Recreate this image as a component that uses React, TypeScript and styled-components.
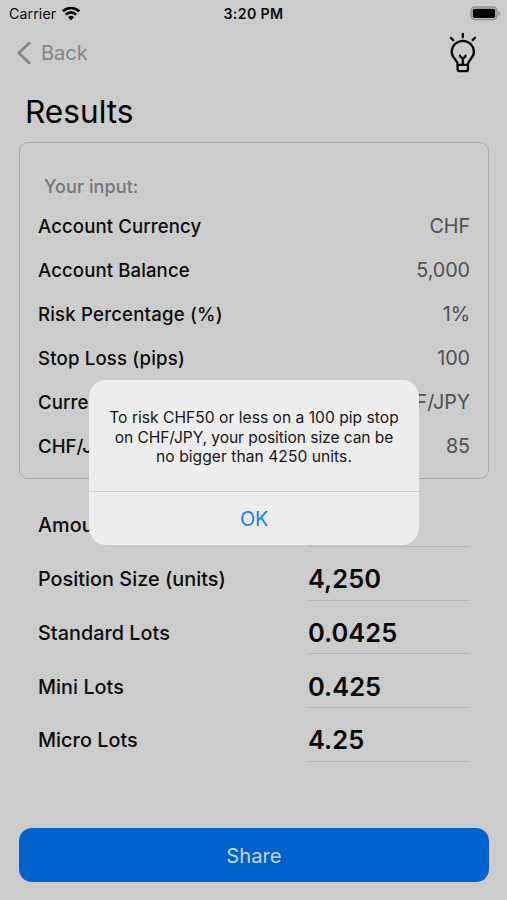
import React from 'react';
import styled, { createGlobalStyle } from 'styled-components';

const GlobalStyle = createGlobalStyle`
  * { box-sizing: border-box; }
  body { margin: 0; background: #cccccc; font-family: Inter, "Liberation Sans", sans-serif; }
`;

const Screen = styled.div`
  position: relative;
  display: flex;
  flex-direction: column;
  width: 507px;
  height: 900px;
  overflow: hidden;
  background: #cccccc;
  color: #0c0c0c;
`;

const StatusBar = styled.header`
  display: grid;
  grid-template-columns: 1fr auto 1fr;
  align-items: center;
  height: 27px;
  padding: 0 6px 0 9px;
`;

const Carrier = styled.div`
  display: flex;
  align-items: center;
  gap: 6px;
  font-size: 14.2px;
  letter-spacing: 0.1px;
`;

const Clock = styled.div`
  margin-right: 3px;
  font-size: 14.2px;
  font-weight: 600;
  letter-spacing: 0.35px;
`;

const Battery = styled.svg`
  justify-self: end;
`;

const NavBar = styled.nav`
  display: flex;
  justify-content: space-between;
  align-items: center;
  height: 52px;
  padding: 0 29px 0 17px;
`;

const BackButton = styled.button`
  display: flex;
  align-items: center;
  gap: 10px;
  padding: 0 0 1px;
  border: 0;
  background: none;
  color: #858585;
  font: 400 20px/24px Inter, sans-serif;
`;

const Title = styled.h1`
  margin: 0;
  height: 63px;
  padding-left: 25px;
  color: #000;
  font-size: 31.6px;
  font-weight: 400;
  line-height: 65px;
`;

const InputCard = styled.section`
  height: 337px;
  margin: 0 18px 0 19px;
  padding: 27px 18px 0;
  border: 1.4px solid #ababab;
  border-radius: 9px;
`;

const CardCaption = styled.div`
  height: 34px;
  padding-left: 6px;
  color: #777777;
  font-size: 18px;
  font-weight: 500;
  line-height: 34px;
  letter-spacing: 0.1px;
`;

const InputRow = styled.div`
  display: flex;
  align-items: center;
  justify-content: space-between;
  height: 44px;
`;

const Label = styled.span<{ $spacing: number }>`
  font-size: 18.6px;
  font-weight: 500;
  letter-spacing: ${(p) => p.$spacing}px;
  white-space: nowrap;
`;

const InputValue = styled.span`
  color: #505050;
  font-size: 19.8px;
  letter-spacing: -0.1px;
`;

const ResultList = styled.section`
  display: flex;
  flex-direction: column;
  margin-top: 14px;
  padding: 0 37px 0 38px;
`;

const ResultRow = styled.div`
  display: grid;
  grid-template-columns: 1fr 162px;
  align-items: end;
  height: 53.75px;
`;

const ResultLabel = styled.span`
  height: 42.5px;
  font-size: 19.8px;
  font-weight: 500;
  line-height: 43px;
  letter-spacing: 0.04px;
  white-space: nowrap;
`;

const ResultValue = styled.div`
  height: 42.5px;
  border-bottom: 1.4px solid #b6b6b6;
  color: #080808;
  font-size: 25.5px;
  font-weight: 600;
  line-height: 42px;
`;

const ShareButton = styled.button`
  height: 54px;
  margin: auto 18px 18px 19px;
  border: 0;
  border-radius: 13px;
  background: #0062cc;
  color: #c7d6ea;
  font: 400 20.2px Inter, sans-serif;
`;

const Alert = styled.div`
  position: absolute;
  top: 380px;
  left: 89px;
  display: flex;
  flex-direction: column;
  width: 330px;
  height: 165px;
  border-radius: 17px;
  background: #ededed;
  overflow: hidden;
`;

const AlertMessage = styled.p`
  flex: 1;
  margin: 0;
  padding-top: 28px;
  color: #161616;
  font-size: 15.6px;
  line-height: 19.5px;
  text-align: center;
  white-space: nowrap;
`;

const AlertLine = styled.span<{ $spacing: number }>`
  display: block;
  letter-spacing: ${(p) => p.$spacing}px;
`;

const AlertAction = styled.button`
  height: 54px;
  padding: 0;
  border: 0;
  border-top: 1px solid #cecece;
  background: none;
  color: #1580f5;
  font: 400 20px Inter, sans-serif;
  letter-spacing: -0.3px;
`;

const inputs = [
  { label: 'Account Currency', value: 'CHF', spacing: 0.1 },
  { label: 'Account Balance', value: '5,000', spacing: 0.1 },
  { label: 'Risk Percentage (%)', value: '1%', spacing: 0.19 },
  { label: 'Stop Loss (pips)', value: '100', spacing: 0.18 },
  { label: 'Currency Pair', value: 'CHF/JPY', spacing: 0.1 },
  { label: 'CHF/JPY', value: '85', spacing: 0 },
];

const results = [
  { label: 'Amount', value: '' },
  { label: 'Position Size (units)', value: '4,250' },
  { label: 'Standard Lots', value: '0.0425' },
  { label: 'Mini Lots', value: '0.425' },
  { label: 'Micro Lots', value: '4.25' },
];

const message = [
  { text: 'To risk CHF50 or less on a 100 pip stop', spacing: 0.02 },
  { text: 'on CHF/JPY, your position size can be', spacing: -0.08 },
  { text: 'no bigger than 4250 units.', spacing: 0.05 },
];

const WifiIcon = () => (
  <svg width="18" height="14" viewBox="0 0 18 14" fill="none" stroke="#000" strokeWidth="2.6">
    <path d="M.9 4.3a11.6 11.6 0 0 1 16.2 0" />
    <path d="M3.7 7.6a7.5 7.5 0 0 1 10.6 0" />
    <path d="M6 10.2a4.3 4.3 0 0 1 6 0L9 13.3z" fill="#000" stroke="none" />
  </svg>
);

const BatteryIcon = () => (
  <Battery width="31" height="15" viewBox="0 0 31 15">
    <rect x="1" y="1" width="26" height="12.6" rx="4" fill="none" stroke="#8c8c8c" strokeWidth="1.5" />
    <rect x="2.8" y="2.7" width="22.4" height="9.2" rx="1.6" fill="#000" />
    <path d="M28.5 5.2c2 .7 2 4 0 4.7z" fill="#8c8c8c" />
  </Battery>
);

const BackIcon = () => (
  <svg width="14" height="24" viewBox="0 0 14 24" fill="none" stroke="#858585" strokeWidth="2.5" strokeLinecap="round" strokeLinejoin="round">
    <path d="M12.300 2 1.800 12l10.500 10" />
  </svg>
);

const BulbIcon = () => (
  <svg width="30" height="42" viewBox="0 0 30 42" fill="none" stroke="#080808" strokeWidth="2.3" strokeLinecap="round" strokeLinejoin="round">
    <path d="M14.800 2v3.200M2.800 5.700l2.400 2.400M27 5.700l-2.400 2.400" />
    <path d="M9.800 32.800c0-5-6.100-6.600-6.100-12.900a11.100 11.100 0 0 1 22.200 0c0 6.300-6.100 7.900-6.100 12.900" />
    <path d="M9.600 32.800h10.400v4.400a2 2 0 0 1-2 2h-6.400a2 2 0 0 1-2-2z" />
    <path d="M14.800 32.500v-5.500M12 23.600c0 2.300 2.800 1.600 2.800 4 0-2.400 2.800-1.700 2.800-4" />
  </svg>
);

export default function App() {
  return (
    <Screen>
      <GlobalStyle />
      <StatusBar>
        <Carrier>
          <span>Carrier</span>
          <WifiIcon />
        </Carrier>
        <Clock>3:20 PM</Clock>
        <BatteryIcon />
      </StatusBar>
      <NavBar>
        <BackButton>
          <BackIcon />
          <span>Back</span>
        </BackButton>
        <BulbIcon />
      </NavBar>
      <Title>Results</Title>
      <InputCard>
        <CardCaption>Your input:</CardCaption>
        {inputs.map((row) => (
          <InputRow key={row.label}>
            <Label $spacing={row.spacing}>{row.label}</Label>
            <InputValue>{row.value}</InputValue>
          </InputRow>
        ))}
      </InputCard>
      <ResultList>
        {results.map((row) => (
          <ResultRow key={row.label}>
            <ResultLabel>{row.label}</ResultLabel>
            <ResultValue>{row.value}</ResultValue>
          </ResultRow>
        ))}
      </ResultList>
      <ShareButton>Share</ShareButton>
      <Alert role="alertdialog">
        <AlertMessage>
          {message.map((line) => (
            <AlertLine key={line.text} $spacing={line.spacing}>{line.text}</AlertLine>
          ))}
        </AlertMessage>
        <AlertAction>OK</AlertAction>
      </Alert>
    </Screen>
  );
}
